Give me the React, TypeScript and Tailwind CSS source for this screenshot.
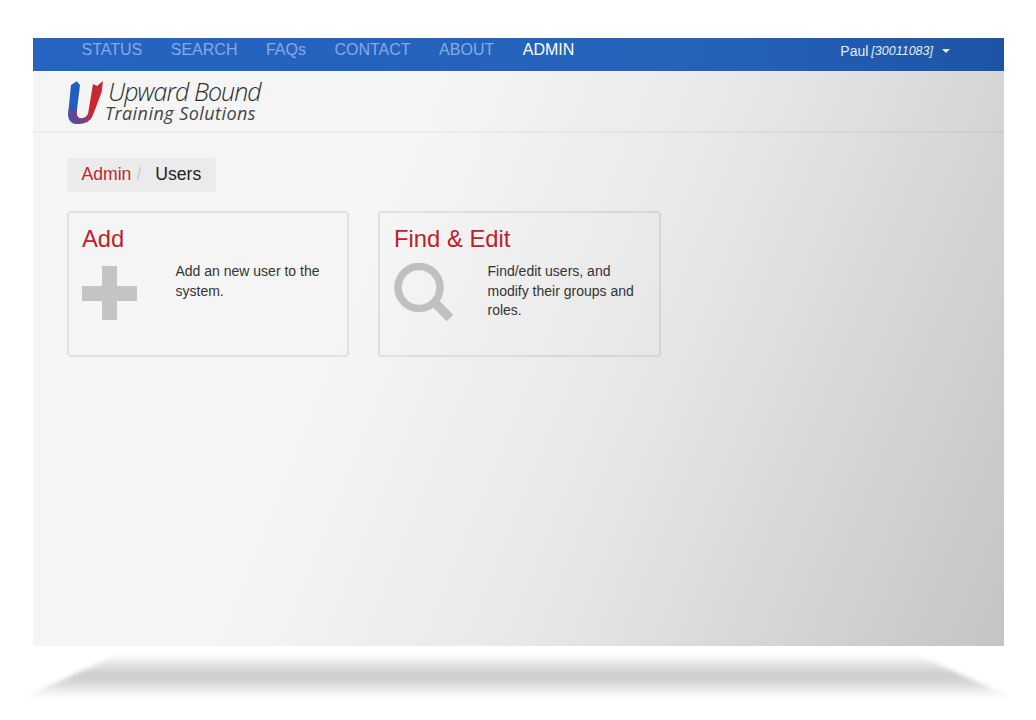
import React from 'react';

const navItems = ['STATUS', 'SEARCH', 'FAQs', 'CONTACT', 'ABOUT'];

const Logo: React.FC = () => (
  <div className="flex items-start">
    <svg width="40" height="48" viewBox="0 0 40 48" className="mt-[9px] shrink-0">
      <defs>
        <linearGradient id="logoU" x1="4" y1="20" x2="34" y2="26" gradientUnits="userSpaceOnUse">
          <stop offset="0.3" stopColor="#1f5fc2" />
          <stop offset="0.62" stopColor="#c8282e" />
        </linearGradient>
        <linearGradient id="logoBowl" x1="6" y1="46" x2="26" y2="32" gradientUnits="userSpaceOnUse">
          <stop offset="0" stopColor="#3f50ac" />
          <stop offset="0.6" stopColor="#8a3b78" />
          <stop offset="1" stopColor="#8a3b78" stopOpacity="0" />
        </linearGradient>
      </defs>
      <path
        d="M5 5 L10.7 1.3 L14 5 L10.7 32 Q10 38 15 38.5 Q20 38 22 34 L27 4 L31 6 L37 1 L35.7 12 L27 35 Q24 43.7 12 44 Q1 44 2.3 32 Z"
        fill="url(#logoU)"
      />
      <path
        d="M2.5 30 L10.9 30 Q10 38 15 38.5 Q20 38 22 34 L28 33 Q24 43.7 12 44 Q1 44 2.5 30 Z"
        fill="url(#logoBowl)"
      />
    </svg>
    <div className="ml-[-1px] flex flex-col font-['Open_Sans',sans-serif] italic text-[#2b2b2b]">
      <span className="ml-[3px] mt-[7px] text-[25px] leading-[26px] font-light tracking-[-0.95px] whitespace-nowrap">
        Upward Bound
      </span>
      <span className="text-[18px] leading-[18px] text-[#444] tracking-[0.45px] whitespace-nowrap">
        Training Solutions
      </span>
    </div>
  </div>
);

const PlusIcon: React.FC = () => (
  <svg width="55" height="55" viewBox="0 0 55 55" className="mt-[4px] shrink-0">
    <path d="M20 0 H35 V20 H55 V35 H35 V54 H20 V35 H0 V20 H20 Z" fill="#c4c4c4" />
  </svg>
);

const SearchIcon: React.FC = () => (
  <svg width="60" height="60" viewBox="0 0 60 60" className="mt-[1px] shrink-0">
    <circle cx="25" cy="24.5" r="21" fill="none" stroke="#c0c0c0" strokeWidth="7.5" />
    <path d="M40 39 L56 55" stroke="#c0c0c0" strokeWidth="9" />
  </svg>
);

type TileProps = { title: string; text: string; icon: React.ReactNode; wide?: boolean };

const Tile: React.FC<TileProps> = ({ title, text, icon, wide }) => (
  <div
    className={
      wide
        ? 'h-[146px] w-[283px] rounded-[4px] border-2 border-black/[0.08] pl-[14px] pr-[10px] pt-[12px]'
        : 'h-[146px] w-[282px] rounded-[4px] border-2 border-black/[0.08] pl-[13px] pr-[10px] pt-[12px]'
    }
  >
    <h3 className="text-[23.8px] leading-[28px] text-[#c0202a]">{title}</h3>
    <div className="mt-[9px] flex">
      <div className="w-[93.5px] shrink-0">{icon}</div>
      <p className="text-[14px] leading-[19.6px] text-[#333]">{text}</p>
    </div>
  </div>
);

const App: React.FC = () => {
  return (
    <div className="h-[720px] overflow-hidden bg-white pt-[38px] font-['Liberation_Sans',Arial,sans-serif]">
      <div className="mx-[33px] h-[608px] w-[971px] bg-[linear-gradient(112deg,#f5f5f5_35%,#e8e8e8_60%,#c4c4c4_100%)]">
        <nav className="flex h-[33px] items-start justify-between bg-[linear-gradient(90deg,#2564c0_0%,#2462ba_70%,#1e54a4_100%)] pl-[48.5px] pr-[54px]">
          <ul className="flex gap-[28.5px] pt-[3px] text-[16px] leading-[18px]">
            {navItems.map((item) => (
              <li key={item} className="text-[#84abe6]">{item}</li>
            ))}
            <li className="text-white">ADMIN</li>
          </ul>
          <div className="flex items-center pt-[4px] text-[#e4ecfa]">
            <span className="text-[14px] leading-[18px]">Paul</span>
            <span className="ml-[3px] text-[12.5px] leading-[18px] italic">[30011083]</span>
            <span className="ml-[9px] h-0 w-0 border-x-[4px] border-t-[4px] border-x-transparent border-t-[#e4ecfa]" />
          </div>
        </nav>

        <header className="h-[62px] border-b-2 border-black/[0.03] pl-[33px]">
          <Logo />
        </header>

        <main className="pl-[34px] pt-[25px]">
          <div className="flex h-[34px] w-[149px] items-center rounded-[4px] bg-[#ebebeb] pb-[1px] pl-[14.5px] text-[17.6px]">
            <span className="text-[#c0282c]">Admin</span>
            <span className="ml-[5px] text-[#ccc]">/</span>
            <span className="ml-[14px] text-[#222]">Users</span>
          </div>
          <div className="mt-[19px] flex gap-[29px]">
            <Tile title="Add" text="Add an new user to the system." icon={<PlusIcon />} />
            <Tile
              wide
              title="Find & Edit"
              text="Find/edit users, and modify their groups and roles."
              icon={<SearchIcon />}
            />
          </div>
        </main>
      </div>

      <svg width="1036" height="74" viewBox="0 0 1036 74" className="block">
        <defs>
          <linearGradient id="floorShadow" x1="0" y1="8" x2="0" y2="54" gradientUnits="userSpaceOnUse">
            <stop offset="0" stopColor="#ffffff" />
            <stop offset="0.22" stopColor="#e4e4e4" />
            <stop offset="0.45" stopColor="#cdcdcd" />
            <stop offset="0.62" stopColor="#d6d6d6" />
            <stop offset="0.85" stopColor="#f4f4f4" />
            <stop offset="1" stopColor="#ffffff" />
          </linearGradient>
          <filter id="floorBlur" x="-5%" y="-30%" width="110%" height="160%">
            <feGaussianBlur stdDeviation="5 1.5" />
          </filter>
        </defs>
        <polygon points="116,9 918,9 1012,52 24,52" fill="url(#floorShadow)" filter="url(#floorBlur)" />
      </svg>
    </div>
  );
};

export default App;
